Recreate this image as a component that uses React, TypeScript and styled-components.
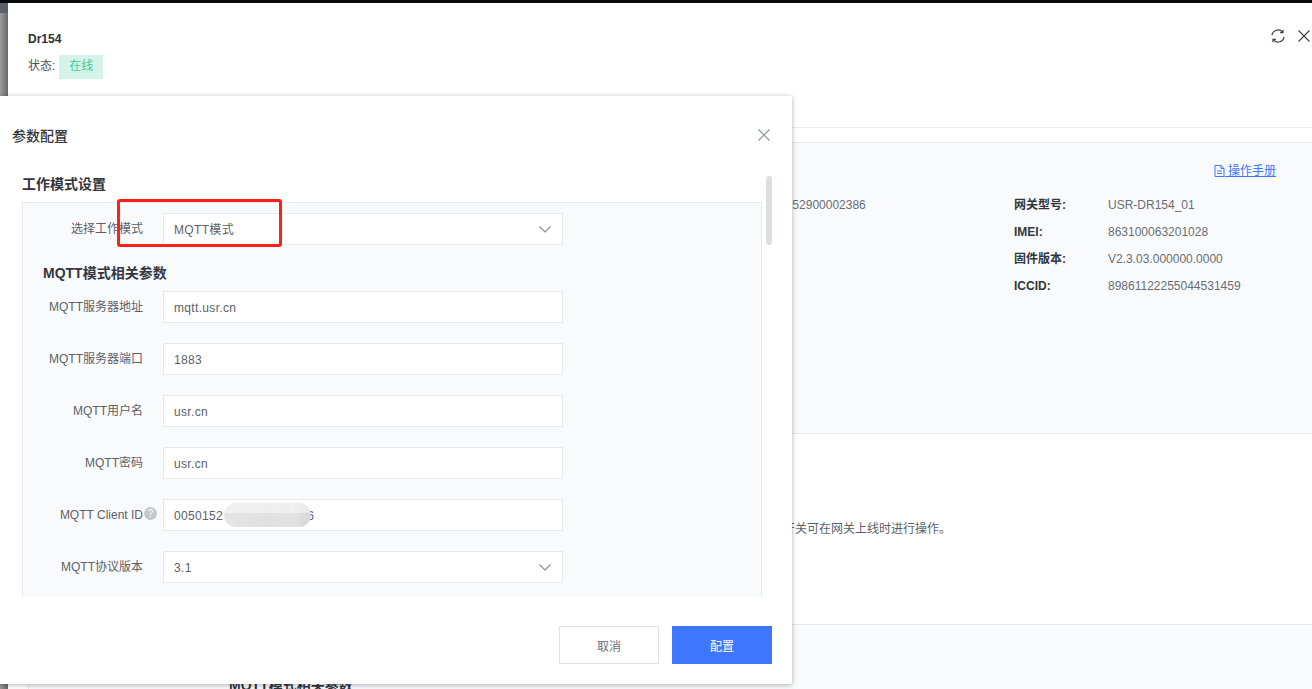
import React from 'react';
import styled, { createGlobalStyle } from 'styled-components';

const GlobalStyle = createGlobalStyle`
  html, body {
    margin: 0;
    padding: 0;
    background: #fff;
  }
  * {
    box-sizing: border-box;
  }
  body {
    font-family: "Liberation Sans", "Noto Sans CJK SC", sans-serif;
    font-size: 12px;
    color: #5c6066;
  }
`;

const Screen = styled.div`
  position: relative;
  width: 1312px;
  height: 689px;
  overflow: hidden;
  display: flex;
  flex-direction: column;
`;

const BlackBar = styled.div`
  height: 3px;
  flex: none;
  background: #08090b;
`;

const Stage = styled.div`
  flex: 1;
  display: flex;
  min-height: 0;
`;

const Backdrop = styled.div`
  width: 8px;
  flex: none;
  background:
    linear-gradient(to bottom, #5b6068 0, #5b6068 10px, transparent 10px),
    linear-gradient(to right, #9c9c9c, #686868);
`;

const Drawer = styled.div`
  flex: 1;
  min-width: 0;
  background: #fff;
  display: flex;
  flex-direction: column;
`;

const DrawerHeader = styled.header`
  height: 125px;
  flex: none;
  padding: 28px 2px 0 20px;
  border-bottom: 1px solid #e9ebf0;
  display: flex;
  justify-content: space-between;
  align-items: flex-start;
`;

const DeviceName = styled.div`
  font-size: 12px;
  line-height: 16px;
  font-weight: 700;
  color: #2b2f36;
`;

const StatusRow = styled.div`
  margin-top: 8px;
  display: flex;
  align-items: center;
  gap: 4px;
  line-height: 16px;
  color: #4c5058;
`;

const StatusLabel = styled.span`
  margin-bottom: 3px;
`;

const StatusTag = styled.span`
  width: 44px;
  height: 24px;
  padding-bottom: 3px;
  display: flex;
  align-items: center;
  justify-content: center;
  background: #d5f3e9;
  color: #3ecb9b;
`;

const HeaderIcons = styled.div`
  display: flex;
  align-items: center;
  gap: 13px;
  margin-top: -2px;
  color: #3a4049;
`;

const DrawerBody = styled.div`
  flex: 1;
  min-height: 0;
  padding: 14px 0 0 20px;
  display: flex;
  flex-direction: column;
`;

const InfoPanel = styled.section`
  height: 292px;
  flex: none;
  background: #f9fafc;
  border-top: 1px solid #e6e9f0;
  border-bottom: 1px solid #e6e9f0;
  padding: 20px 36px 0 731px;
`;

const ManualRow = styled.div`
  display: flex;
  justify-content: flex-end;
  margin-bottom: 18px;
`;

const ManualLink = styled.a`
  display: flex;
  align-items: center;
  line-height: 16px;
  color: #3e76fe;
  text-decoration: none;
`;

const ManualText = styled.span`
  text-decoration: underline;
`;

const InfoColumns = styled.div`
  display: grid;
  grid-template-columns: 255px 1fr;
`;

const InfoList = styled.div`
  display: flex;
  flex-direction: column;
  gap: 11px;
`;

const InfoRow = styled.div`
  display: flex;
  line-height: 16px;
`;

const InfoLabel = styled.span`
  width: 94px;
  flex: none;
  font-weight: 700;
  color: #33363c;
`;

const InfoValue = styled.span`
  color: #696d74;
`;

const NoteSection = styled.section`
  height: 190px;
  flex: none;
  padding: 87px 0 0 755px;
`;

const NoteText = styled.p`
  margin: 0;
  line-height: 16px;
  color: #5c6066;
`;

const ParamPanel = styled.section`
  flex: 1;
  background: #f9fafc;
  border-top: 1px solid #e6e9f0;
  border-left: 1px solid #e6e9f0;
  padding: 52px 0 0 200px;
`;

const ParamTitle = styled.div`
  font-size: 14px;
  line-height: 16px;
  font-weight: 700;
  color: #33363c;
`;

const Modal = styled.div`
  position: absolute;
  left: 0;
  top: 96px;
  width: 792px;
  height: 588px;
  background: #fff;
  box-shadow: 0 1px 5px rgba(0, 0, 0, 0.3);
  display: flex;
  flex-direction: column;
`;

const ModalHeader = styled.div`
  height: 80px;
  flex: none;
  padding: 32px 20px 0 12px;
  display: flex;
  justify-content: space-between;
  align-items: flex-start;
`;

const ModalTitle = styled.h2`
  margin: 0;
  font-size: 14px;
  line-height: 16px;
  font-weight: 500;
  color: #33363c;
`;

const CloseButton = styled.span`
  display: flex;
  margin-top: -1px;
  color: #8b8f96;
`;

const ScrollArea = styled.div`
  position: relative;
  height: 421px;
  flex: none;
  overflow: hidden;
  padding: 0 30px 0 22px;
`;

const ScrollThumb = styled.div`
  position: absolute;
  top: 0;
  left: 766px;
  width: 6px;
  height: 69px;
  border-radius: 3px;
  background: #dcdee2;
`;

const SectionTitle = styled.h3`
  margin: 0 0 10px;
  font-size: 14px;
  line-height: 16px;
  font-weight: 700;
  color: #33363c;
`;

const FormPanel = styled.div`
  background: #f9fafc;
  border: 1px solid #e6e9f0;
  padding: 10px 0 0;
  height: 500px;
`;

const GroupTitle = styled.h4`
  margin: 20px 0 10px 20px;
  font-size: 14px;
  line-height: 16px;
  font-weight: 700;
  color: #33363c;
`;

const FormRow = styled.div<{ $flush?: boolean }>`
  display: flex;
  align-items: center;
  margin-bottom: ${(p) => (p.$flush ? 0 : 20)}px;
`;

const FieldLabel = styled.label`
  position: relative;
  width: 120px;
  flex: none;
  margin-right: 20px;
  text-align: right;
  white-space: nowrap;
  line-height: 16px;
  color: #5c6066;
`;

const HelpDot = styled.span`
  position: absolute;
  left: 100%;
  top: 0;
  margin-left: 1px;
  width: 13px;
  height: 13px;
  border-radius: 50%;
  background: #c4c6ca;
  color: #fff;
  font-size: 10px;
  line-height: 13px;
  text-align: center;
`;

const Field = styled.div`
  position: relative;
  width: 400px;
  height: 32px;
  flex: none;
  padding: 1px 10px 0;
  background: #fff;
  border: 1px solid #e6e9f0;
  display: flex;
  align-items: center;
  justify-content: space-between;
  line-height: 16px;
  letter-spacing: 0.33px;
  color: #5c6066;
  white-space: pre;
`;

const Chevron = styled.svg`
  flex: none;
  margin-top: -1px;
  color: #85888e;
`;

const BlurPatch = styled.span`
  position: absolute;
  left: 60px;
  top: 3px;
  width: 87px;
  height: 24px;
  border-radius: 12px;
  background:
    linear-gradient(to bottom, rgba(255, 255, 255, 0.45) 0, rgba(255, 255, 255, 0.45) 10px, transparent 10px),
    linear-gradient(to right, #e6e6e6, #e0e0e0 50%, #e3e3e3 80%, #d8d8d8 95%);
`;

const ModalFooter = styled.div`
  flex: 1;
  padding: 29px 20px 0 0;
  display: flex;
  justify-content: flex-end;
  gap: 13px;
`;

const FooterButton = styled.button<{ $primary?: boolean }>`
  width: 100px;
  height: 38px;
  padding: 0;
  font-family: inherit;
  font-size: 12px;
  background: ${(p) => (p.$primary ? '#3e76fe' : '#fff')};
  color: ${(p) => (p.$primary ? '#fff' : '#6a6e75')};
  border: ${(p) => (p.$primary ? 'none' : '1px solid #dfe1e6')};
`;

const RedMark = styled.div`
  position: absolute;
  left: 117px;
  top: 199px;
  width: 165px;
  height: 48px;
  border: 3px solid #fb2116;
  border-radius: 3px;
`;

const ChevronIcon = () => (
  <Chevron width="14" height="14" viewBox="0 0 14 14" fill="none" stroke="currentColor" strokeWidth="1.1">
    <polyline points="1.5,4.5 7,10 12.5,4.5" />
  </Chevron>
);

const fields = [
  { label: 'MQTT服务器地址', value: 'mqtt.usr.cn' },
  { label: 'MQTT服务器端口', value: '1883' },
  { label: 'MQTT用户名', value: 'usr.cn' },
  { label: 'MQTT密码', value: 'usr.cn' },
];

// the middle of the client id is smudged out in the picture
const clientId = `0050152${' '.repeat(23)}6`;

const App: React.FC = () => {
  return (
    <Screen>
      <GlobalStyle />
      <BlackBar />
      <Stage>
        <Backdrop />
        <Drawer>
          <DrawerHeader>
            <div>
              <DeviceName>Dr154</DeviceName>
              <StatusRow>
                <StatusLabel>状态:</StatusLabel>
                <StatusTag>在线</StatusTag>
              </StatusRow>
            </div>
            <HeaderIcons>
              <svg width="14" height="14" viewBox="0 0 14 14" fill="none" stroke="currentColor" strokeWidth="1.2">
                <path d="M1 6.2A6 6 0 0 1 11.6 3.2" />
                <path d="M13 7.8A6 6 0 0 1 2.4 10.8" />
                <path d="M12 .8v2.9H9.1" />
                <path d="M2 13.2v-2.9h2.9" />
              </svg>
              <svg width="12" height="12" viewBox="0 0 12 12" fill="none" stroke="currentColor" strokeWidth="1.1">
                <path d="M.5.5l11 11M11.5.5l-11 11" />
              </svg>
            </HeaderIcons>
          </DrawerHeader>
          <DrawerBody>
            <InfoPanel>
              <ManualRow>
                <ManualLink href="#">
                  <svg width="11" height="12" viewBox="0 0 11 12" fill="none" stroke="currentColor" strokeWidth="1">
                    <path d="M1 .5h6l3 3v8H1z" />
                    <path d="M7 .5v3h3M3 6h5M3 8.5h5" />
                  </svg>
                  <ManualText>&nbsp;操作手册</ManualText>
                </ManualLink>
              </ManualRow>
              <InfoColumns>
                <InfoList>
                  <InfoRow>
                    <InfoValue>0050152900002386</InfoValue>
                  </InfoRow>
                </InfoList>
                <InfoList>
                  <InfoRow>
                    <InfoLabel>网关型号:</InfoLabel>
                    <InfoValue>USR-DR154_01</InfoValue>
                  </InfoRow>
                  <InfoRow>
                    <InfoLabel>IMEI:</InfoLabel>
                    <InfoValue>863100063201028</InfoValue>
                  </InfoRow>
                  <InfoRow>
                    <InfoLabel>固件版本:</InfoLabel>
                    <InfoValue>V2.3.03.000000.0000</InfoValue>
                  </InfoRow>
                  <InfoRow>
                    <InfoLabel>ICCID:</InfoLabel>
                    <InfoValue>89861122255044531459</InfoValue>
                  </InfoRow>
                </InfoList>
              </InfoColumns>
            </InfoPanel>
            <NoteSection>
              <NoteText>开关可在网关上线时进行操作。</NoteText>
            </NoteSection>
            <ParamPanel>
              <ParamTitle>MQTT模式相关参数</ParamTitle>
            </ParamPanel>
          </DrawerBody>
        </Drawer>
      </Stage>

      <Modal>
        <ModalHeader>
          <ModalTitle>参数配置</ModalTitle>
          <CloseButton>
            <svg width="16" height="16" viewBox="0 0 16 16" fill="none" stroke="currentColor" strokeWidth="1.1">
              <path d="M2.5 2.5l11 11M13.5 2.5l-11 11" />
            </svg>
          </CloseButton>
        </ModalHeader>
        <ScrollArea>
          <SectionTitle>工作模式设置</SectionTitle>
          <FormPanel>
            <FormRow $flush>
              <FieldLabel>选择工作模式</FieldLabel>
              <Field>
                MQTT模式
                <ChevronIcon />
              </Field>
            </FormRow>
            <GroupTitle>MQTT模式相关参数</GroupTitle>
            {fields.map((f) => (
              <FormRow key={f.label}>
                <FieldLabel>{f.label}</FieldLabel>
                <Field>{f.value}</Field>
              </FormRow>
            ))}
            <FormRow>
              <FieldLabel>
                MQTT Client ID
                <HelpDot>?</HelpDot>
              </FieldLabel>
              <Field>
                {clientId}
                <BlurPatch />
              </Field>
            </FormRow>
            <FormRow>
              <FieldLabel>MQTT协议版本</FieldLabel>
              <Field>
                3.1
                <ChevronIcon />
              </Field>
            </FormRow>
          </FormPanel>
          <ScrollThumb />
        </ScrollArea>
        <ModalFooter>
          <FooterButton>取消</FooterButton>
          <FooterButton $primary>配置</FooterButton>
        </ModalFooter>
      </Modal>

      <RedMark />
    </Screen>
  );
};

export default App;
